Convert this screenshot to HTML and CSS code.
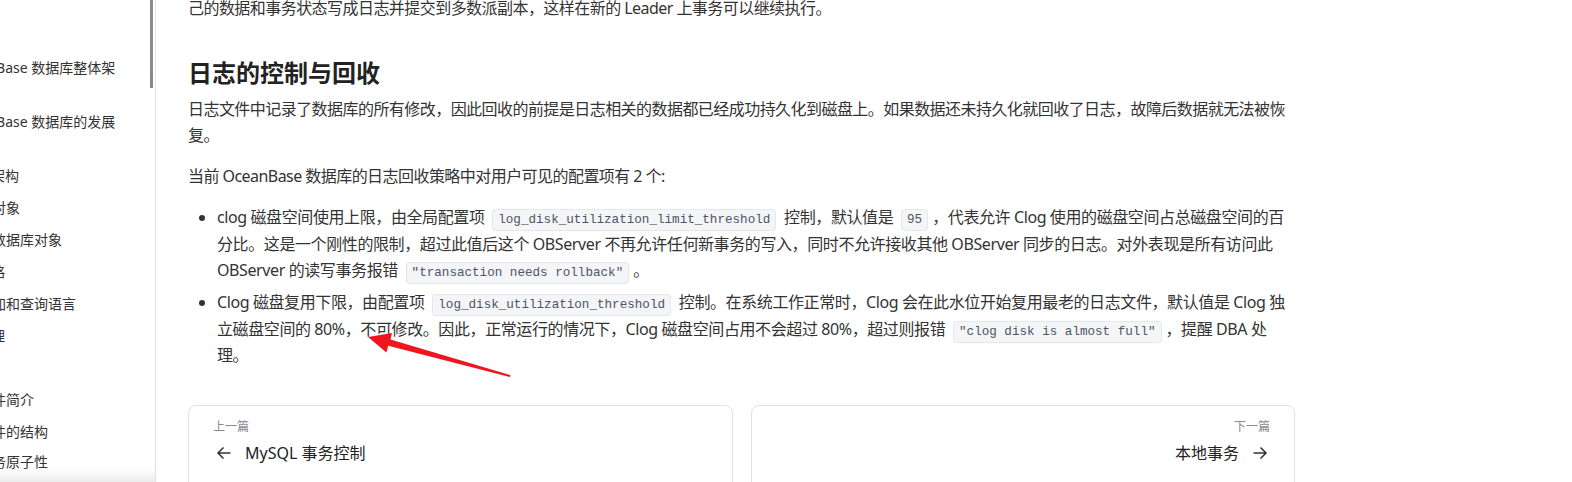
FILE: index.html
```html
<!DOCTYPE html>
<html>
<head>
    <meta charset="UTF-8">
    <title>日志的控制与回收</title>
    <link rel="stylesheet" href="styles.css">
</head>
<body>
    <aside class="sidebar">
        <div class="nav-list">
            <div class="nav-item two-line first">OceanBase 数据库整体架</div>
            <div class="nav-item two-line">OceanBase 数据库的发展</div>
            <div class="nav-item cut-9">架构</div>
            <div class="nav-item cut-8">对象</div>
            <div class="nav-item cut-8">数据库对象</div>
            <div class="nav-item cut-9">略</div>
            <div class="nav-item cut-8">加和查询语言</div>
            <div class="nav-item cut-9">理</div>
            <div class="nav-item cut-8 group">件简介</div>
            <div class="nav-item cut-8">件的结构</div>
            <div class="nav-item cut-8 last">务原子性</div>
        </div>
        <div class="scroll-thumb"></div>
        <div class="sidebar-fade"></div>
    </aside>

    <main class="content">
        <div class="doc">
            <p class="first-line">己的数据和事务状态写成日志并提交到多数派副本，这样在新的 Leader 上事务可以继续执行。</p>

            <h2 class="doc-title">日志的控制与回收</h2>

            <p>日志文件中记录了数据库的所有修改，因此回收的前提是日志相关的数据都已经成功持久化到磁盘上。如果数据还未持久化就回收了日志，故障后数据就无法被恢复。</p>

            <p>当前 OceanBase 数据库的日志回收策略中对用户可见的配置项有 2 个:</p>

            <ul class="doc-list">
                <li>clog 磁盘空间使用上限，由全局配置项 <code>log_disk_utilization_limit_threshold</code> 控制，默认值是 <code>95</code>，代表允许 Clog 使用的磁盘空间占总磁盘空间的百分比。这是一个刚性的限制，超过此值后这个 OBServer 不再允许任何新事务的写入，同时不允许接收其他 OBServer 同步的日志。对外表现是所有访问此 OBServer 的读写事务报错 <code>"transaction needs rollback"</code>。</li>
                <li>Clog 磁盘复用下限，由配置项 <code>log_disk_utilization_threshold</code> 控制。在系统工作正常时，Clog 会在此水位开始复用最老的日志文件，默认值是 Clog 独立磁盘空间的 80%，不可修改。因此，正常运行的情况下，Clog 磁盘空间占用不会超过 80%，超过则报错 <code>"clog disk is almost full"</code>，提醒 DBA 处理。</li>
            </ul>

            <nav class="pager">
                <a class="pager-card">
                    <div class="pager-label">上一篇</div>
                    <div class="pager-title">
                        <svg class="pager-arrow" width="16" height="16" viewBox="0 0 16 16">
                            <path d="M14.5 8H2M7.5 2.5L2 8l5.5 5.5" fill="none" stroke="#333" stroke-width="1.5"/>
                        </svg>
                        <span>MySQL 事务控制</span>
                    </div>
                </a>
                <a class="pager-card next">
                    <div class="pager-label">下一篇</div>
                    <div class="pager-title">
                        <span>本地事务</span>
                        <svg class="pager-arrow" width="16" height="16" viewBox="0 0 16 16">
                            <path d="M1.5 8H14M8.5 2.5L14 8l-5.5 5.5" fill="none" stroke="#333" stroke-width="1.5"/>
                        </svg>
                    </div>
                </a>
            </nav>
        </div>
    </main>

    <svg class="annotation" width="1572" height="482" viewBox="0 0 1572 482">
        <polygon points="368,337 392,333 390.5,339.6 510.5,375.2 509.8,377 388.2,345.8 386.4,352.4" fill="#f0141e"/>
    </svg>
</body>
</html>
```

FILE: styles.css
```css
:root {
    --text-color: #333333;
    --title-color: #222222;
    --border-color: #e2e2e3;
    --muted: #8a8a8f;
}

html, body {
    height: 100%;
}

body {
    margin: 0;
    padding: 0;
    display: flex;
    overflow: hidden;
    background: white;
    color: var(--text-color);
    font-family: "Noto Sans", "Noto Sans CJK SC", sans-serif;
    position: relative;
}

/* sidebar */

.sidebar {
    width: 155px;
    flex-shrink: 0;
    border-right: 1px solid #e3e3e3;
    position: relative;
    overflow: hidden;
}

.nav-list {
    padding-top: 52px;
    display: flex;
    flex-direction: column;
    font-size: 14px;
    color: #333;
}

.nav-item {
    height: 32px;
    line-height: 32px;
    white-space: nowrap;
}

.nav-item.two-line {
    margin-left: -46px;
    margin-bottom: 22px;
}

.nav-item.cut-9 {
    margin-left: -9px;
}

.nav-item.cut-8 {
    margin-left: -8px;
}

.nav-item.group {
    margin-top: 32px;
}

.nav-item.last {
    height: 28px;
    line-height: 28px;
}

.scroll-thumb {
    position: absolute;
    top: 0;
    right: 2px;
    width: 3px;
    height: 88px;
    background: linear-gradient(#8d8d8d 70%, #7d8a96);
}

.sidebar-fade {
    position: absolute;
    left: 0;
    right: 0;
    bottom: 0;
    height: 14px;
    background: linear-gradient(rgba(240, 240, 240, 0), #ececec);
}

/* content */

.content {
    flex: 1;
    padding-left: 32px;
}

.doc {
    width: 1107px;
    font-size: 16px;
    line-height: 26.7px;
    letter-spacing: -0.4px;
}

.doc p {
    margin: 0 0 14px;
    letter-spacing: -0.55px;
}

.doc .first-line {
    margin-top: -5px;
    margin-bottom: 0;
}

.doc-title {
    margin: 35px 0 7px;
    font-size: 24px;
    line-height: 32px;
    font-weight: 700;
    letter-spacing: 0;
    color: var(--title-color);
}

.doc-list {
    margin: 12px 0 0;
    padding-left: 29px;
}

.doc-list li + li {
    margin-top: 5px;
}

code {
    font-family: "Liberation Mono", monospace;
    font-size: 12.6px;
    line-height: 1;
    letter-spacing: 0;
    margin: 0 4px;
    padding: 3px 5px;
    border-radius: 4px;
    background-color: #f4f5f7;
    border: 1px solid #e6e7ea;
    color: #4e5466;
}

/* prev / next */

.pager {
    margin-top: 36px;
    display: grid;
    grid-template-columns: 1fr 1fr;
    gap: 18px;
}

.pager-card {
    display: block;
    border: 1px solid var(--border-color);
    border-radius: 8px;
    padding: 12px 24px 40px 27px;
    letter-spacing: 0;
}

.pager-label {
    margin-left: -3px;
    font-size: 12px;
    line-height: 18px;
    color: var(--muted);
}

.pager-title {
    margin-top: 4px;
    display: flex;
    align-items: center;
    gap: 13px;
    font-size: 16px;
    line-height: 26px;
    color: var(--title-color);
}

.pager-card.next {
    text-align: right;
}

.pager-card.next .pager-label {
    margin-left: 0;
}

.pager-card.next .pager-title {
    justify-content: flex-end;
    padding-right: 2px;
}

.annotation {
    position: absolute;
    top: 0;
    left: 0;
    pointer-events: none;
}
```
